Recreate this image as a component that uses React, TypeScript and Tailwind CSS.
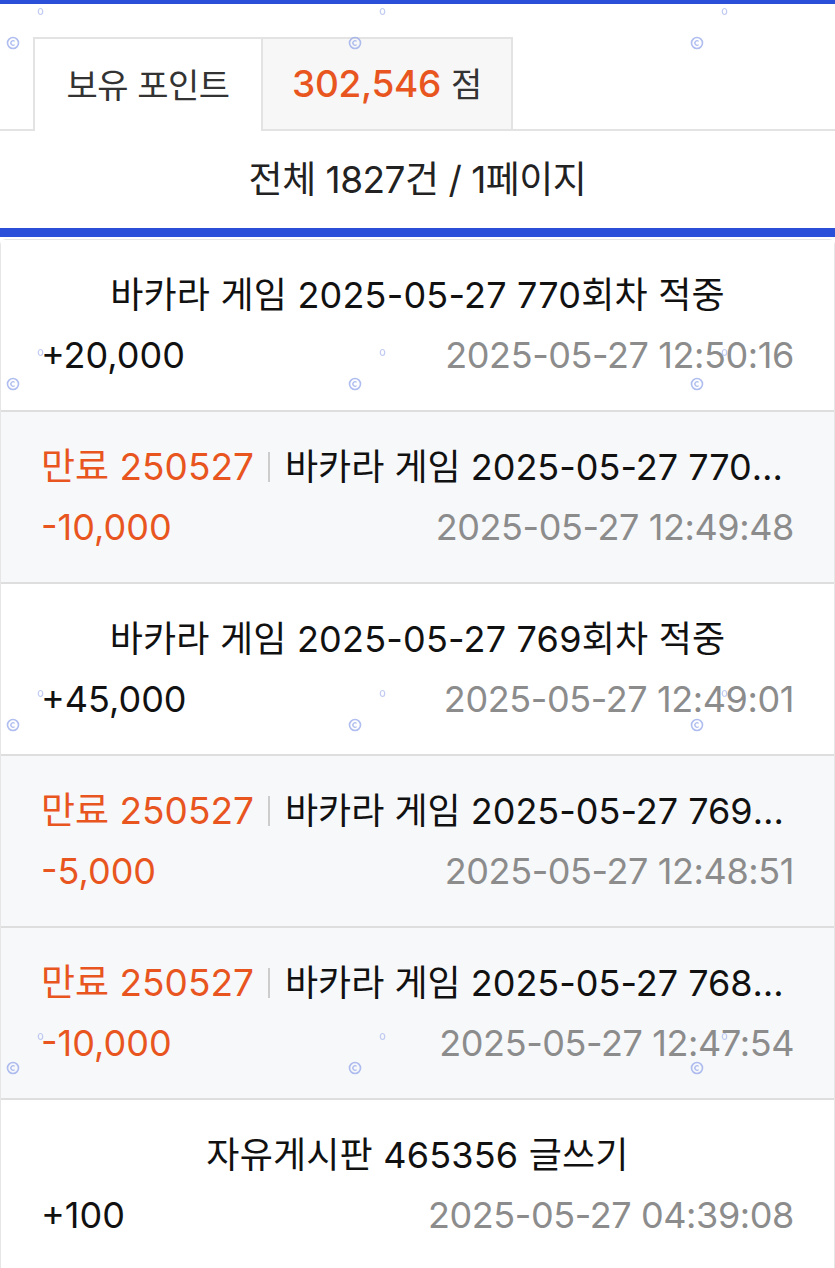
import React from 'react';

interface PointRow {
    id: number;
    title: string;
    amount: string;
    date: string;
    expired?: boolean;
}

const rows: PointRow[] = [
    { id: 1, title: '바카라 게임 2025-05-27 770회차 적중', amount: '+20,000', date: '2025-05-27 12:50:16' },
    { id: 2, title: '바카라 게임 2025-05-27 770회차 적중', amount: '-10,000', date: '2025-05-27 12:49:48', expired: true },
    { id: 3, title: '바카라 게임 2025-05-27 769회차 적중', amount: '+45,000', date: '2025-05-27 12:49:01' },
    { id: 4, title: '바카라 게임 2025-05-27 769회차 적중', amount: '-5,000', date: '2025-05-27 12:48:51', expired: true },
    { id: 5, title: '바카라 게임 2025-05-27 768회차 적중', amount: '-10,000', date: '2025-05-27 12:47:54', expired: true },
    { id: 6, title: '자유게시판 465356 글쓰기', amount: '+100', date: '2025-05-27 04:39:08' },
];

const font = { fontFamily: 'Inter, "Noto Sans CJK KR", sans-serif' };

function Watermark() {
    const cols = [13, 355, 697];
    const rowsY = [43, 384, 725, 1068];
    return (
        <div className="pointer-events-none absolute inset-0 overflow-hidden opacity-70">
            {rowsY.map((y) =>
                cols.map((x) => (
                    <React.Fragment key={`${x}-${y}`}>
                        <svg className="absolute" style={{ left: x - 7, top: y - 7 }} width="14" height="14" viewBox="0 0 14 14">
                            <circle cx="7" cy="7" r="5.5" fill="none" stroke="#8ea2ea" strokeWidth="1.6" />
                            <path d="M8.6 5.4 A2.2 2.2 0 1 0 8.6 8.6" fill="none" stroke="#8ea2ea" strokeWidth="1.3" />
                        </svg>
                        <svg className="absolute" style={{ left: x + 24, top: y - 36 }} width="7" height="9" viewBox="0 0 7 9">
                            <ellipse cx="3.5" cy="4.5" rx="2.2" ry="3" fill="none" stroke="#a9b7ee" strokeWidth="1.2" />
                        </svg>
                    </React.Fragment>
                ))
            )}
        </div>
    );
}

export default function App() {
    return (
        <div className="relative w-[835px] h-[1268px] overflow-hidden bg-white text-[#111]" style={font}>
            <div className="h-[4px] bg-[#2c4fd9]" />

            <div className="flex items-end h-[127px] pt-[33px]">
                <div className="w-[33px] h-full border-b-2 border-[#e3e3e3]" />
                <div className="flex items-center justify-center w-[230px] h-full border-2 border-b-0 border-[#e3e3e3] bg-white text-[34px] text-[#333] tracking-[-0.5px]">
                    보유 포인트
                </div>
                <div className="flex items-center justify-center w-[250px] h-full border-t-2 border-r-2 border-b-2 border-[#e3e3e3] bg-[#f7f7f7] text-[34px] tracking-[-0.3px]">
                    <span className="text-[#e8551f] text-[37px] font-medium">302,546</span>
                    <span className="ml-[10px] text-[#333]">점</span>
                </div>
                <div className="flex-1 h-full border-b-2 border-[#e3e3e3]" />
            </div>

            <div className="flex items-center justify-center h-[97px] text-[37px] text-[#222] tracking-[-0.5px]">
                전체 1827건 / 1페이지
            </div>
            <div className="h-[9px] bg-[#2c4fd9]" />

            <div className="mt-[2px] border-t border-x border-[#e6e6e6] rounded-t-[6px]">
                {rows.map((row) => (
                    <div
                        key={row.id}
                        className={`px-[40px] py-[25px] border-b-2 border-[#dedede] ${row.expired ? 'bg-[#f7f8fa]' : 'bg-white'}`}
                    >
                        {row.expired ? (
                            <div className="flex items-center h-[60px] text-[36px] whitespace-nowrap">
                                <span className="shrink-0 text-[#e8551f] text-[37px]">만료 250527</span>
                                <span className="shrink-0 ml-[14px] mr-[15px] h-[30px] w-[2px] bg-[#cdcdcd]" />
                                <span className="min-w-0 truncate text-[#111]">{row.title}</span>
                            </div>
                        ) : (
                            <div className="flex items-center justify-center h-[60px] text-[36px] tracking-[0.2px] whitespace-nowrap text-[#111]">
                                {row.title}
                            </div>
                        )}
                        <div className="flex items-center justify-between h-[60px] text-[36px]">
                            <span className={row.amount.startsWith('-') ? 'text-[#e8551f]' : 'text-[#111]'}>{row.amount}</span>
                            <span className="text-[#8c8c8c] tracking-[-0.4px]">{row.date}</span>
                        </div>
                    </div>
                ))}
            </div>

            <Watermark />
        </div>
    );
}
